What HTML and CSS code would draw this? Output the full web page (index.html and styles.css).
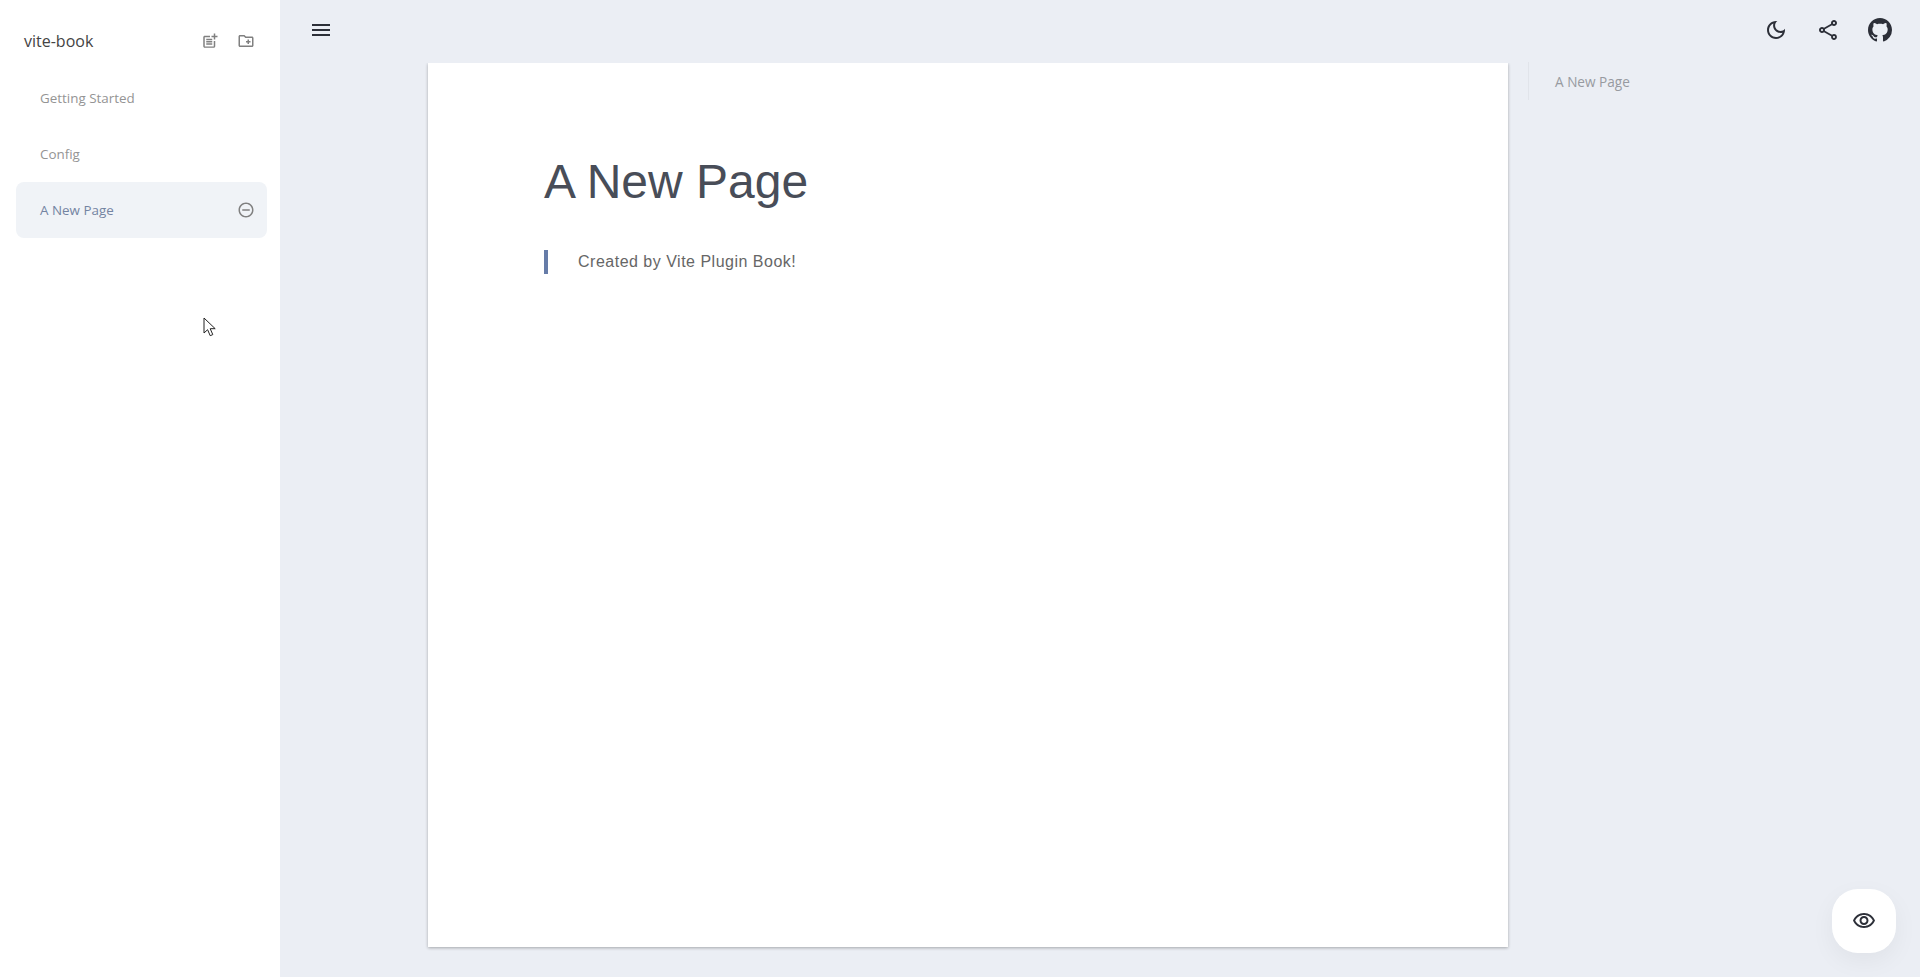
FILE: index.html
```html
<!DOCTYPE html>
<html lang="en">
<head>
  <meta charset="UTF-8">
  <meta name="viewport" content="width=device-width, initial-scale=1.0">
  <title>vite-book</title>
  <link rel="stylesheet" href="styles.css">
</head>
<body>
  <!-- Sidebar -->
  <aside class="sidebar">
    <div class="brand">
      <span class="brand-name">vite-book</span>
      <svg class="icon-sm add-page" viewBox="0 0 24 24"><path d="M17 19.22H5V7h7V5H5c-1.1 0-2 .9-2 2v12c0 1.1.9 2 2 2h12c1.1 0 2-.9 2-2v-7h-2v7.22z"/><path d="M19 2h-2v3h-3c.01.01 0 2 0 2h3v2.99c.01.01 2 0 2 0V7h3V5h-3V2z"/><path d="M7 9h8v2H7zM7 12h8v2H7zM7 15h8v2H7z"/></svg>
      <svg class="icon-sm" viewBox="0 0 24 24"><path d="M20 6h-8l-2-2H4c-1.11 0-1.99.89-1.99 2L2 18c0 1.11.89 2 2 2h16c1.11 0 2-.89 2-2V8c0-1.11-.89-2-2-2zm0 12H4V6h5.17l2 2H20v10zm-8-4h2v2h2v-2h2v-2h-2v-2h-2v2h-2z"/></svg>
    </div>
    <nav class="menu">
      <div class="menu-item">Getting Started</div>
      <div class="menu-item">Config</div>
      <div class="menu-item active">
        <span>A New Page</span>
        <svg class="icon-sm" viewBox="0 0 24 24"><path d="M7 11v2h10v-2H7zm5-9C6.48 2 2 6.48 2 12s4.48 10 10 10 10-4.48 10-10S17.52 2 12 2zm0 18c-4.41 0-8-3.59-8-8s3.59-8 8-8 8 3.59 8 8-3.59 8-8 8z"/></svg>
      </div>
    </nav>
  </aside>

  <div class="main">
    <!-- Top bar -->
    <header class="topbar">
      <svg class="icon" viewBox="0 0 24 24"><path d="M3 18h18v-2H3v2zm0-5h18v-2H3v2zm0-7v2h18V6H3z"/></svg>
      <div class="topbar-right">
        <svg class="icon" viewBox="0 0 24 24"><path d="M9.37 5.51C9.19 6.15 9.1 6.82 9.1 7.5c0 4.08 3.32 7.4 7.4 7.4.68 0 1.35-.09 1.99-.27C17.45 17.19 14.93 19 12 19c-3.86 0-7-3.14-7-7 0-2.93 1.81-5.45 4.37-6.49zM12 3c-4.97 0-9 4.03-9 9s4.03 9 9 9 9-4.03 9-9c0-.46-.04-.92-.1-1.36-.98 1.37-2.58 2.26-4.4 2.26-2.98 0-5.4-2.42-5.4-5.4 0-1.81.89-3.42 2.26-4.4-.44-.06-.9-.1-1.36-.1z"/></svg>
        <svg class="icon" viewBox="0 0 24 24"><path d="M18 16.08c-.76 0-1.44.3-1.96.77L8.91 12.7c.05-.23.09-.46.09-.7s-.04-.47-.09-.7l7.05-4.11c.54.5 1.25.81 2.04.81 1.66 0 3-1.34 3-3s-1.34-3-3-3-3 1.34-3 3c0 .24.04.47.09.7L8.04 9.81C7.5 9.31 6.79 9 6 9c-1.66 0-3 1.34-3 3s1.34 3 3 3c.79 0 1.5-.31 2.04-.81l7.12 4.16c-.05.21-.08.43-.08.65 0 1.61 1.31 2.92 2.92 2.92s2.92-1.31 2.92-2.92c0-1.61-1.31-2.92-2.92-2.92zM18 4c.55 0 1 .45 1 1s-.45 1-1 1-1-.45-1-1 .45-1 1-1zM6 13c-.55 0-1-.45-1-1s.45-1 1-1 1 .45 1 1-.45 1-1 1zm12 7.02c-.55 0-1-.45-1-1s.45-1 1-1 1 .45 1 1-.45 1-1 1z"/></svg>
        <svg class="icon" viewBox="0 0 16 16"><path d="M8 0C3.58 0 0 3.58 0 8c0 3.54 2.29 6.53 5.47 7.59.4.07.55-.17.55-.38 0-.19-.01-.82-.01-1.49-2.01.37-2.53-.49-2.69-.94-.09-.23-.48-.94-.82-1.13-.28-.15-.68-.52-.01-.53.63-.01 1.08.58 1.23.82.72 1.21 1.87.87 2.33.66.07-.52.28-.87.51-1.07-1.78-.2-3.64-.89-3.64-3.95 0-.87.31-1.59.82-2.15-.08-.2-.36-1.02.08-2.12 0 0 .67-.21 2.2.82.64-.18 1.32-.27 2-.27.68 0 1.36.09 2 .27 1.53-1.04 2.2-.82 2.2-.82.44 1.1.16 1.92.08 2.12.51.56.82 1.27.82 2.15 0 3.07-1.87 3.75-3.65 3.95.29.25.54.73.54 1.48 0 1.07-.01 1.93-.01 2.2 0 .21.15.46.55.38A8.013 8.013 0 0016 8c0-4.42-3.58-8-8-8z"/></svg>
      </div>
    </header>

    <div class="content">
      <article class="paper">
        <h1>A New Page</h1>
        <blockquote>Created by Vite Plugin Book!</blockquote>
      </article>
      <div class="toc">
        <div class="toc-item">A New Page</div>
      </div>
    </div>
  </div>

  <!-- Preview button -->
  <button class="fab">
    <svg class="icon" viewBox="0 0 24 24"><path d="M12 6c3.79 0 7.17 2.13 8.82 5.5C19.17 14.87 15.79 17 12 17s-7.17-2.13-8.82-5.5C4.83 8.13 8.21 6 12 6m0-2C7 4 2.73 7.11 1 11.5 2.73 15.89 7 19 12 19s9.27-3.11 11-7.5C21.27 7.11 17 4 12 4zm0 5c1.38 0 2.5 1.12 2.5 2.5S13.38 14 12 14s-2.5-1.12-2.5-2.5S10.62 9 12 9m0-2c-2.48 0-4.5 2.02-4.5 4.5S9.52 16 12 16s4.5-2.02 4.5-4.5S14.48 7 12 7z"/></svg>
  </button>

  <!-- Mouse pointer caught in the screenshot -->
  <svg class="cursor" viewBox="0 0 13 20"><path d="M1 1v15l3.6-3.3 2.6 6 2.6-1.1-2.6-5.9h5z" fill="#fff" stroke="#222" stroke-width="1"/></svg>
</body>
</html>
```

FILE: styles.css
```css
* {
  box-sizing: border-box;
}

html, body {
  height: 100%;
}

body {
  margin: 0;
  display: flex;
  background-color: #ebeef4;
  font-family: "Open Sans", sans-serif;
  overflow: hidden;
}

/* Sidebar */
.sidebar {
  width: 280px;
  flex-shrink: 0;
  background-color: #fff;
  padding: 0 13px 0 16px;
}

.brand {
  display: flex;
  align-items: center;
  height: 70px;
  padding: 12px 12px 0 8px;
  gap: 18px;
}

.brand-name {
  flex: 1;
  font-size: 16px;
  color: #444;
}

.menu-item {
  display: flex;
  align-items: center;
  justify-content: space-between;
  height: 56px;
  padding: 0 12px 0 24px;
  border-radius: 8px;
  font-size: 13.4px;
  color: #949494;
}

.menu-item.active {
  background-color: #f0f3f7;
  color: #7484a2;
}

.icon-sm {
  width: 18px;
  height: 18px;
  fill: #808080;
}

/* Main column */
.main {
  flex: 1;
  min-width: 0;
  display: flex;
  flex-direction: column;
}

.topbar {
  position: relative;
  z-index: 1;
  display: flex;
  align-items: center;
  justify-content: space-between;
  height: 63px;
  padding: 0 28px 4px 29px;
  flex-shrink: 0;
  background-color: #ebeef4;
}

.topbar-right {
  display: flex;
  gap: 28px;
}

.icon {
  width: 24px;
  height: 24px;
  fill: #2c2f38;
  display: block;
}

.content {
  display: flex;
  padding-left: 148px;
}

.paper {
  width: 1080px;
  height: 884px;
  background-color: #fff;
  padding: 91px 116px;
  box-shadow: 0 1px 3px rgba(0, 0, 0, 0.3);
}

h1 {
  margin: 0 0 40px;
  font-family: "Liberation Sans", Arial, sans-serif;
  font-size: 48px;
  font-weight: 400;
  line-height: 56px;
  color: #484d58;
}

blockquote {
  margin: 0;
  padding-left: 30px;
  border-left: 4px solid #667ca8;
  font-family: "Liberation Sans", Arial, sans-serif;
  font-size: 16px;
  line-height: 24px;
  letter-spacing: 0.5px;
  color: #666;
}

/* Table of contents */
.toc {
  position: relative;
  z-index: 2;
  margin-left: 20px;
  margin-top: -1px;
  height: 38px;
  padding: 1px 0 0 26px;
  border-left: 1px solid #e1e4ea;
}

.toc-item {
  font-size: 13.6px;
  line-height: 38px;
  color: #979aa0;
}

/* Floating preview button */
.fab {
  position: fixed;
  right: 24px;
  bottom: 24px;
  width: 64px;
  height: 64px;
  display: flex;
  align-items: center;
  justify-content: center;
  padding: 0;
  border: 0;
  border-radius: 26px;
  background-color: #fff;
  box-shadow: 0 8px 24px rgba(0, 0, 0, 0.05);
}

.cursor {
  position: fixed;
  left: 203px;
  top: 317px;
  width: 13px;
  height: 20px;
}
```
